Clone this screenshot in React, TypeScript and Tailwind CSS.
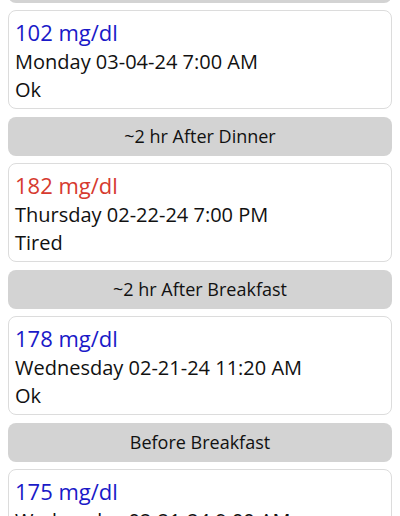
import React from "react";

type Entry = { header?: string; value: string; color: "blue" | "red"; date: string; note: string };

const entries: Entry[] = [
  { value: "102 mg/dl", color: "blue", date: "Monday 03-04-24 7:00 AM", note: "Ok" },
  { header: "~2 hr After Dinner", value: "182 mg/dl", color: "red", date: "Thursday 02-22-24 7:00 PM", note: "Tired" },
  { header: "~2 hr After Breakfast", value: "178 mg/dl", color: "blue", date: "Wednesday 02-21-24 11:20 AM", note: "Ok" },
  { header: "Before Breakfast", value: "175 mg/dl", color: "blue", date: "Wednesday 02-21-24 9:00 AM", note: "Ok" },
];

function Header({ text, first }: { text: string; first?: boolean }) {
  return (
    <div
      className={
        (first ? "mt-[-36px] " : "mt-[8px] ") +
        "h-[39px] rounded-[8px] bg-[#d3d3d3] flex items-center justify-center text-[18px] text-[#111]"
      }
    >
      {text}
    </div>
  );
}

export default function App() {
  return (
    <div
      className="w-[400px] h-[516px] overflow-hidden bg-white px-2"
      style={{ fontFamily: '"Open Sans", "Noto Sans", sans-serif' }}
    >
      <Header text="Before Breakfast" first />
      {entries.map((e, i) => (
        <React.Fragment key={i}>
          {e.header && <Header text={e.header} />}
          <div className="mt-[7px] h-[99px] rounded-[8px] border border-[#dcdcdc] bg-white px-[6px] pt-[6px] leading-[28px]">
            <div className={"text-[22px] leading-[30px] " + (e.color === "blue" ? "text-[#1a1ac8]" : "text-[#d63a2f]")}>
              {e.value}
            </div>
            <div className="text-[20px] text-[#111] mt-[1px]">{e.date}</div>
            <div className="text-[20px] text-[#111]">{e.note}</div>
          </div>
        </React.Fragment>
      ))}
    </div>
  );
}
